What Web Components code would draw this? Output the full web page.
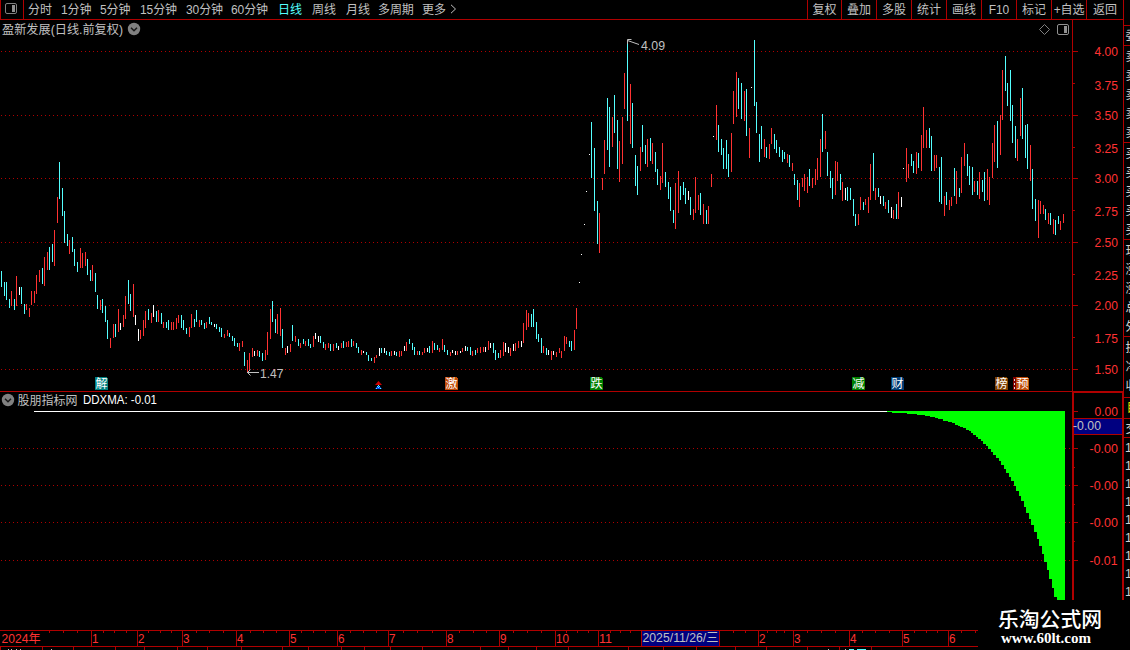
<!DOCTYPE html>
<html lang="zh-CN">
<head>
<meta charset="utf-8">
<title>盈新发展</title>
<style>
  :root {
    --line: #b00000;
    --up: #ff3232;
    --down: #54ffff;
    --ink: #c0c0c0;
    --ui: "Liberation Sans", "Noto Sans CJK SC", sans-serif;
  }
  html, body { margin: 0; background: #000; }
  body { width: 1130px; height: 650px; overflow: hidden; color: var(--ink); font: 12px/1 var(--ui); }
</style>
</head>
<body>
<stock-screen>
  <tool-bar>
    <tool-item w="33">分时</tool-item>
    <tool-item w="39">1分钟</tool-item>
    <tool-item w="40">5分钟</tool-item>
    <tool-item w="46">15分钟</tool-item>
    <tool-item w="45">30分钟</tool-item>
    <tool-item w="47">60分钟</tool-item>
    <tool-item w="34" active>日线</tool-item>
    <tool-item w="34">周线</tool-item>
    <tool-item w="32">月线</tool-item>
    <tool-item w="44">多周期</tool-item>
    <tool-item w="24" more>更多</tool-item>
    <tool-item slot="right" boxed w="34">复权</tool-item>
    <tool-item slot="right" boxed w="35">叠加</tool-item>
    <tool-item slot="right" boxed w="35">多股</tool-item>
    <tool-item slot="right" boxed w="35">统计</tool-item>
    <tool-item slot="right" boxed w="35">画线</tool-item>
    <tool-item slot="right" boxed w="35">F10</tool-item>
    <tool-item slot="right" boxed w="35">标记</tool-item>
    <tool-item slot="right" boxed w="35">+自选</tool-item>
    <tool-item slot="right" boxed w="37">返回</tool-item>
  </tool-bar>
  <kline-pane></kline-pane>
  <ddx-pane></ddx-pane>
  <time-axis></time-axis>
  <quote-strip slot="side"></quote-strip>
  <site-mark slot="over"></site-mark>
</stock-screen>

<script>
// ── shared drawing helpers ──────────────────────────────────────────

const SVG_STYLES = `
  :host { display: block; }
  svg { display: block; }
  text { font-family: "Liberation Sans", "Noto Sans CJK SC", sans-serif; font-size: 12.5px; fill: #ff3232; }
  .crisp { shape-rendering: crispEdges; }
  .ln { fill: #b00000; }
  .grid { stroke: #b00000; stroke-dasharray: 1 3; fill: none; }
`;

const rect = (x, y, w, h, fill) =>
  `<rect x="${x}" y="${y}" width="${w}" height="${h}" ${fill ? `fill="${fill}"` : 'class="ln"'}/>`;

// Text squeezed to a known width, mid = vertical centre of the digits
const label = (x, mid, w, s, extra = '') =>
  `<text x="${x}" y="${mid + 4.5}" textLength="${w}" lengthAdjust="spacingAndGlyphs" ${extra}>${s}</text>`;

const gridLine = (y) => `<path class="grid" d="M1 ${y + .5}H1070"/>`;

const toggle = (cx, cy) => `
  <circle cx="${cx}" cy="${cy}" r="6.2" fill="#808080"/>
  <path d="M${cx - 3} ${cy - 1.2}l3 3 3-3" fill="none" stroke="#181818" stroke-width="1.5"/>`;

// ── layout shell ────────────────────────────────────────────────────

class StockScreen extends HTMLElement {
  constructor() {
    super();
    this.attachShadow({ mode: 'open' }).innerHTML = `
      <style>
        :host { display: grid; grid-template-columns: 1123px 7px; width: 1130px; height: 650px; position: relative; overflow: hidden; }
        .main { display: flex; flex-direction: column; min-width: 0; }
        .over { position: absolute; left: 978px; top: 600px; }
      </style>
      <div class="main"><slot></slot></div>
      <slot name="side"></slot>
      <div class="over"><slot name="over"></slot></div>`;
  }
}

class ToolBar extends HTMLElement {
  constructor() {
    super();
    this.attachShadow({ mode: 'open' }).innerHTML = `
      <style>
        :host { display: flex; justify-content: space-between; height: 19px; border-bottom: 1px solid var(--line); }
        .left, .right { display: flex; }
        .icon { box-sizing: border-box; width: 24px; height: 19px; margin-right: 4px; border: solid var(--line); border-width: 0 1px; }
        svg { display: block; }
      </style>
      <div class="left">
        <div class="icon">
          <svg width="22" height="19" viewBox="1 0 22 19">
            <rect x="5.5" y="3.5" width="11" height="10" rx="1.5" fill="none" stroke="#808080"/>
            <rect x="12" y="5" width="3" height="7" fill="#909090"/>
          </svg>
        </div>
        <slot></slot>
      </div>
      <div class="right"><slot name="right"></slot></div>`;
  }
}

class ToolItem extends HTMLElement {
  constructor() {
    super();
    this.attachShadow({ mode: 'open' }).innerHTML = `
      <style>
        :host { box-sizing: border-box; display: flex; align-items: center; height: 19px; white-space: nowrap; letter-spacing: -.1px; }
        :host([active]) { color: var(--down); }
        :host([boxed]) { justify-content: center; border-left: 1px solid var(--line); }
        svg { display: none; flex: none; margin: -2px 0 0 4px; }
        :host([more]) svg { display: block; }
      </style>
      <slot></slot>
      <svg width="7" height="10" viewBox="0 0 7 10"><path d="M1 .8L5.5 5 1 9.2" fill="none" stroke="#c0c0c0"/></svg>`;
  }
  connectedCallback() {
    this.style.width = `${this.getAttribute('w')}px`;
    if (this.hasAttribute('more')) this.style.width = 'auto';
  }
}

// ── price pane ──────────────────────────────────────────────────────

// x top bottom, colour suffix: r = up, c = down, w = flat
const BARS = `
1 271 287c,4 282 296c,6 282 300c,9 299 308c,11 291 306r,14 299 310c,16 276 306r,19 287 295w,21 287 304c,24 304 314c,
26 304 310r,29 308 317r,31 291 305r,34 291 303r,36 275 294r,39 270 282r,42 268 284c,44 257 286r,47 252 270r,49 247 270c,
52 244 262c,54 230 266r,57 197 223r,59 162 199c,62 188 216c,64 211 243c,67 234 246c,69 240 254r,72 237 252c,74 249 266c,
77 262 272c,80 248 268r,82 253 268r,85 252 266r,87 259 275c,90 270 281c,92 265 281r,95 273 292c,97 295 309c,100 300 310r,
102 299 313c,105 306 322c,107 320 339c,110 338 348r,113 324 338r,115 324 337c,118 309 332r,120 323 330w,123 315 327r,125 296 319r,
128 280 304c,130 294 311c,133 284 317r,135 315 325w,138 329 341w,140 330 339r,143 320 336r,145 311 328r,148 309 320c,151 313 323r,
153 305 317w,156 311 322c,158 310 322r,161 313 324c,163 322 328r,166 322 328c,168 320 330c,171 322 330r,173 322 330r,176 318 329r,
178 315 323r,181 315 328c,183 320 330c,186 328 334c,189 327 337r,191 314 328r,194 319 327c,196 310 322c,199 320 327r,201 320 325c,
204 323 329c,206 322 328r,209 317 324c,211 322 325c,214 324 327w,216 324 329c,219 327 332c,221 328 337c,224 334 338r,227 330 336r,
229 333 337c,232 336 341c,234 338 346c,237 343 347c,239 343 351r,242 341 347r,244 352 366c,247 360 373r,249 353 370r,252 348 357r,
254 351 356w,257 350 356r,259 351 357c,262 353 361c,265 350 360r,267 332 355r,270 309 339r,272 301 322c,275 319 333c,277 314 334r,
280 308 336r,282 329 348c,285 348 355r,287 346 353w,290 344 352r,292 325 341c,295 336 342r,298 339 346c,300 343 348r,303 339 344c,
305 341 346r,308 339 346c,310 344 348c,313 336 347r,315 333 339w,318 336 342w,320 336 343c,323 342 348c,325 344 350r,328 343 348r,
330 344 351c,333 344 351r,336 343 348c,338 346 350w,341 343 348r,343 341 348c,346 342 347r,348 341 347r,351 339 347c,353 341 346r,
356 343 348c,358 347 353c,361 350 355r,363 351 353w,366 352 355c,368 355 361c,371 358 361c,374 357 363r,376 355 358r,379 348 356w,
381 348 353c,384 348 353w,386 351 355c,389 352 356c,391 351 356r,394 351 355w,396 352 356c,399 351 357r,401 351 356r,404 346 351w,
406 342 351r,409 339 344c,412 343 350c,414 347 355c,417 351 355r,419 351 355c,422 352 355r,424 348 353r,427 348 352w,429 346 353c,
432 341 353r,434 343 350c,437 345 350c,439 348 352r,442 339 350r,444 345 352c,447 350 355c,450 352 356r,452 350 353w,455 351 355w,
457 351 355r,460 351 353w,462 348 352r,465 346 351w,467 347 351c,470 347 355c,472 351 356r,475 350 355c,477 348 353r,480 347 353r,
483 347 352r,485 347 352w,488 341 350r,490 343 348w,493 343 353c,495 350 360c,498 353 358c,500 350 358r,503 342 356r,505 343 352w,
508 347 353w,510 348 356r,513 344 351w,515 343 351r,518 341 348r,521 341 347w,523 323 343r,526 310 330r,528 313 327r,531 314 327c,
533 309 327c,536 322 339c,538 334 342c,541 338 353c,543 346 353r,546 348 355c,548 350 355w,551 351 360r,553 351 355w,556 352 357r,
559 348 353r,561 351 358r,564 336 351r,566 337 344r,569 341 347c,571 341 351c,574 330 350r,576 308 329r,579 282 283w,581 254 255w,
584 224 225w,586 191 192w,589 154 155w,591 122 178c,594 148 211c,597 201 244c,599 213 253r,602 178 190r,604 140 174r,607 98 150c,
609 107 167c,612 117 147r,614 95 133c,617 120 169c,619 141 182r,622 117 164r,624 73 109r,627 42 121c,630 84 144r,632 103 148c,
635 155 186c,637 166 195c,640 147 171r,642 125 152c,645 145 164c,647 139 167r,650 138 161c,652 143 164r,655 152 172c,657 169 185c,
660 176 190r,662 143 183r,665 172 187c,668 182 199c,670 187 211c,673 210 223c,675 183 229r,678 171 213r,680 186 200c,683 182 195c,
685 188 204c,688 191 200w,690 197 215c,693 209 220r,695 177 213r,698 195 210r,700 193 215c,703 204 224r,706 210 224c,708 206 224r,
711 174 187r,713 136 137w,716 105 140r,718 125 152c,721 139 155c,723 148 169c,726 140 169c,728 154 177c,731 133 172r,733 91 124r,
736 72 117r,738 78 109c,741 83 119c,744 91 121r,746 89 136c,749 128 158r,751 87 88w,754 40 106c,756 102 133c,759 134 162c,
761 126 149c,764 139 157r,766 147 158c,769 144 159r,771 128 144r,774 134 149c,776 140 153c,779 147 157c,782 150 162c,784 152 159c,
787 154 163r,789 155 167c,792 163 171r,794 174 185c,797 180 200c,799 183 207r,802 178 187r,804 174 191r,807 177 193r,809 169 186c,
812 178 188r,815 169 185r,817 158 180r,820 139 177r,822 114 152c,825 131 149r,827 152 176c,830 171 188c,832 178 199c,835 161 195r,
837 162 181r,840 174 190c,842 182 201r,845 188 200w,847 187 201c,850 188 200c,853 199 216c,855 214 226c,858 214 225r,860 197 210r,
863 202 210c,865 199 205r,868 197 213r,870 164 200r,873 153 191c,875 188 200r,878 188 197c,880 196 204w,883 196 206c,885 202 209r,
888 200 213c,891 207 218w,893 210 219r,896 204 219c,898 192 219r,901 197 207w,903 168 169w,906 148 182r,908 164 178r,911 154 166c,
913 161 173c,916 152 174r,918 153 168c,921 135 171r,923 107 148r,926 130 148r,929 128 148c,931 136 171c,934 155 171r,936 155 168r,
939 167 202c,941 157 204c,944 196 216r,946 192 205c,949 200 210r,951 197 206r,954 168 196c,956 171 204r,959 188 197c,961 157 193r,
964 143 166r,967 154 176c,969 166 185c,972 167 195c,974 181 192r,977 181 195c,979 172 199r,982 180 192c,984 172 201c,987 169 200r,
989 177 205r,992 143 178r,994 125 162r,997 121 168c,1000 115 155r,1002 70 120r,1005 56 91c,1007 83 106c,1010 70 121c,1012 105 143c,
1015 126 158c,1017 139 161r,1020 98 136r,1022 88 139c,1025 125 158c,1027 124 169c,1030 145 181r,1032 169 209c,1035 199 221c,1038 200 238r,
1040 201 214r,1043 205 214r,1045 209 220c,1048 213 224r,1050 213 225c,1053 219 234r,1055 220 235c,1058 216 224c,1060 221 230r,1063 214 223r`;

const BAR_COLORS = { r: '#ff3232', c: '#54ffff', w: '#ffffff' };

const PRICES = [
  ['4.00', 51, 51], ['3.75', 83, 85], ['3.50', 115, 115], ['3.25', 147, 148], ['3.00', 178, 178], ['2.75', 210, 211],
  ['2.50', 242, 242], ['2.25', 274, 275], ['2.00', 305, 305], ['1.75', 337, 338], ['1.50', 369, 369],
];

const BADGES = [
  ['解', 95, '#008080'], ['激', 445, '#c04c08'], ['跌', 590, '#008000'], ['减', 852, '#008000'],
  ['财', 891, '#003c74'], ['榜', 995, '#804000'], ['预', 1016, '#c04c08'],
];

class KlinePane extends HTMLElement {
  constructor() {
    super();
    const paths = { r: '', c: '', w: '' };
    for (const bar of BARS.trim().split(/,\s*/)) {
      const [x, top, bottom] = bar.slice(0, -1).split(' ').map(Number);
      paths[bar.slice(-1)] += `M${x} ${top}h1V${bottom}h-1z`;
    }
    const bars = Object.keys(paths).map((k) => `<path fill="${BAR_COLORS[k]}" d="${paths[k]}"/>`).join('');
    const major = PRICES.filter((p, i) => i % 2 === 0);
    const ticks = PRICES.map((p, i) => rect(1073, p[1], i % 2 ? 2 : 5, 1)).join('');
    const prices = PRICES.map((p) => label(1094.5, p[2], 23.5, p[0])).join('');
    const badges = BADGES.map(([s, x, bg]) => `
      <path class="crisp" d="M${x} 377h11l2 2v11h-13z" fill="${bg}"/>
      <text x="${x + .5}" y="388" style="font-size:12px;fill:#fff">${s}</text>`).join('');

    this.attachShadow({ mode: 'open' }).innerHTML = `
      <style>${SVG_STYLES}
        .gray { fill: #c0c0c0; }
        .hint { fill: none; stroke: #c0c0c0; }
      </style>
      <svg width="1123" height="372" viewBox="0 20 1123 372">
        <g class="crisp">
          ${major.map((p) => gridLine(p[1])).join('')}
          ${bars}
          ${rect(1072, 20, 1, 371)}${ticks}
          ${rect(0, 391, 1123, 1)}
        </g>
        ${prices}
        ${label(2, 29.5, 121, '盈新发展(日线.前复权)', 'class="gray" style="font-size:12px"')}
        ${toggle(134, 29)}
        <path d="M1044.5 24.5l5 5-5 5-5-5z" fill="none" stroke="#808080"/>
        <rect x="1057.500" y="24.500" width="11" height="10" rx="1.500" fill="none" stroke="#909090"/>
        <rect x="1064" y="26" width="3" height="7" fill="#909090"/>
        <path class="hint" d="M627.500 40.500L639 44.500M627.500 44v-4.500h4"/>
        ${label(641, 45, 24, '4.09', 'class="gray"')}
        <path class="hint" d="M247 372.500h12M250.500 369.500l-3 3 3 3"/>
        ${label(260, 373, 23.5, '1.47', 'class="gray"')}
        <path class="crisp" d="M1013 377h3v13h-3z" fill="#800000"/>
        <path d="M1014.500 379v2m0 2v2m0 2v2" stroke="#ddd"/>
        ${badges}
        <path d="M375 385l3.500-4 3.500 4z" fill="#d00000"/>
        <path d="M375 389l3.500-4 3.500 4z" fill="#0040ff"/>
        <path class="crisp" d="M378 385h1v1h-1zM377 386h1v1h-1zM379 386h1v1h-1zM376 388h1v1h-1zM378 387h1v1h-1zM380 388h1v1h-1z" fill="#54ffff"/>
      </svg>`;
  }
}

// ── indicator pane ──────────────────────────────────────────────────

// [start x, bottom y] in thirds of a pixel from (860, 400)
const STEPS = [
  [81, 36], [96, 39], [141, 42], [171, 45], [195, 48], [210, 51], [225, 54], [234, 57], [249, 63], [264, 66],
  [276, 69], [285, 75], [294, 78], [300, 81], [309, 84], [318, 90], [327, 93], [333, 99], [339, 105], [348, 111],
  [354, 117], [363, 123], [369, 132], [378, 138], [384, 147], [393, 156], [399, 165], [408, 174], [417, 183],
  [423, 195], [432, 207], [438, 219], [447, 231], [453, 243], [462, 258], [468, 273], [477, 288], [483, 303],
  [492, 321], [498, 339], [507, 357], [513, 375], [522, 396], [531, 417], [537, 438], [546, 462], [552, 486],
  [561, 510], [567, 537], [576, 564], [582, 591], [591, 600],
];

class DdxPane extends HTMLElement {
  constructor() {
    super();
    let area = 'M887 411';
    for (const [x, y] of STEPS) area += `H${860 + x / 3}V${400 + y / 3}`;
    area += 'H1065V411z';
    const levels = [448, 485, 522, 560];

    this.attachShadow({ mode: 'open' }).innerHTML = `
      <style>${SVG_STYLES}</style>
      <svg width="1123" height="238" viewBox="0 392 1123 238">
        <g class="crisp">
          ${levels.map(gridLine).join('')}
          ${rect(34, 411, 853, 1, '#fff')}
          <path d="${area}" fill="#00ff00"/>
          ${rect(1072, 392, 2, 208)}
          ${rect(1072, 392, 51, 1)}
          ${rect(1122, 392, 1, 208)}
          ${[411, ...levels].map((y) => rect(1074, y, 4, 1)).join('')}
          ${[467, 504, 541].map((y) => rect(1074, y, 1, 1)).join('')}
          ${rect(1074, 418, 48, 17)}
          ${rect(1074, 419, 48, 15, '#000080')}
        </g>
        ${toggle(8, 400)}
        ${label(17.5, 400.5, 60, '股朋指标网', 'style="font-size:12px;fill:#c0c0c0"')}
        ${label(83, 399.5, 74, 'DDXMA: -0.01', 'style="fill:#fff"')}
        ${label(1094.5, 411, 23.5, '0.00')}
        ${label(1089.5, 448, 28.5, '-0.00')}
        ${label(1089.5, 485, 28.5, '-0.00')}
        ${label(1089.5, 522, 28.5, '-0.00')}
        ${label(1089.5, 560, 28, '-0.01')}
        ${label(1073, 425.5, 28, '-0.00', 'style="fill:#c0c0c0"')}
      </svg>`;
  }
}

// ── time axis ───────────────────────────────────────────────────────

const MONTHS = [
  ['1', 91], ['2', 137], ['3', 182], ['4', 236], ['5', 289], ['6', 337], ['7', 388], ['8', 446], ['9', 499],
  ['10', 555], ['11', 598], ['', 641], ['', 719], ['2', 758], ['3', 793], ['4', 849], ['5', 902], ['6', 948],
];
const WEEKS = [
  49, 63, 77, 103, 114, 126, 148, 160, 171, 196, 209, 223, 250, 263, 276, 301, 313, 325, 350, 363, 376,
  403, 417, 432, 459, 473, 486, 513, 527, 541, 566, 577, 588, 610, 620, 630, 733, 745, 767, 776, 784,
  807, 821, 835, 862, 875, 889, 914, 926, 937, 961, 975,
];
const TABS = [
  0, 42, 73, 115, 144, 177, 207, 241, 282, 308, 341, 364, 390, 422, 480, 508, 536, 568, 628, 663, 696,
  735, 766, 807, 839, 871,
];

class TimeAxis extends HTMLElement {
  constructor() {
    super();
    this.attachShadow({ mode: 'open' }).innerHTML = `
      <style>${SVG_STYLES}</style>
      <svg width="1123" height="20" viewBox="0 630 1123 20">
        <g class="crisp">
          ${rect(0, 630, 978, 1)}${rect(0, 646, 978, 1)}
          ${MONTHS.map((m) => rect(m[1], 631, 1, 15)).join('')}
          ${WEEKS.map((x) => rect(x, 631, 1, 2)).join('')}
          ${TABS.map((x) => rect(x, 647, 1, 3)).join('')}
          ${rect(642, 631, 77, 15, '#000080')}
          ${[8, 11, 16, 20, 51, 828, 845].map((x) => rect(x, 649, 1, 1, '#c0c0c0')).join('')}
          ${rect(849, 649, 5, 1, '#54ffff')}${rect(857, 649, 9, 1, '#54ffff')}
        </g>
        ${label(1.5, 638.5, 39, '2024年')}
        ${MONTHS.filter((m) => m[0]).map(([s, x]) => label(x + 1, 638.5, s.length * 6.5, s)).join('')}
        ${label(642.5, 637.5, 76, '2025/11/26/三', 'style="fill:#c0c0c0"')}
      </svg>`;
  }
}

// ── clipped quote list on the right edge ────────────────────────────

class QuoteStrip extends HTMLElement {
  constructor() {
    super();
    const rows = [['委', 35]];
    for (let i = 0; i < 5; i++) rows.push(['卖', 56 + i * 19], ['买', 153 + i * 19]);
    ['现', '涨', '涨', '总', '外'].forEach((s, i) => rows.push([s, 250 + i * 19]));
    ['换', '净', '收'].forEach((s, i) => rows.push([s, 347 + i * 19]));
    rows.push(['交', 428]);
    const text = rows.map(([s, y]) => `<text x="1125.500" y="${y + 4.5}">${s}</text>`).join('');
    let times = '';
    for (let y = 447; y < 600; y += 18) times += `<text x="1125" y="${y + 4.5}">14</text>`;

    this.attachShadow({ mode: 'open' }).innerHTML = `
      <style>${SVG_STYLES}
        :host { overflow: hidden; }
        text { fill: #d0d0d0; font-size: 12.5px; }
        text.hot { fill: #e0e000; }
      </style>
      <svg width="7" height="650" viewBox="1123 0 7 650">
        ${text}${times}
        <text class="hot" x="1126.500" y="412">目</text>
        <g class="crisp">
          ${rect(1123, 0, 1, 600)}
          ${[25, 45, 142, 239, 336, 397, 418, 437].map((y) => rect(1124, y, 6, 1)).join('')}
          ${rect(1123, 600, 7, 50, '#000')}
        </g>
      </svg>`;
  }
}

class SiteMark extends HTMLElement {
  constructor() {
    super();
    this.attachShadow({ mode: 'open' }).innerHTML = `
      <style>
        :host { box-sizing: border-box; display: flex; flex-direction: column; width: 152px; height: 50px; padding: 7px 0 0 20px; background: #000; color: #fff; white-space: nowrap; }
        .name { font: 500 20.8px/22px "Noto Sans CJK SC", sans-serif; }
        .url { margin-left: 3px; font: 700 15px/19px "Liberation Serif", serif; }
      </style>
      <span class="name">乐淘公式网</span>
      <span class="url">www.60lt.com</span>`;
  }
}

customElements.define('stock-screen', StockScreen);
customElements.define('tool-bar', ToolBar);
customElements.define('tool-item', ToolItem);
customElements.define('kline-pane', KlinePane);
customElements.define('ddx-pane', DdxPane);
customElements.define('time-axis', TimeAxis);
customElements.define('quote-strip', QuoteStrip);
customElements.define('site-mark', SiteMark);
</script>
</body>
</html>
